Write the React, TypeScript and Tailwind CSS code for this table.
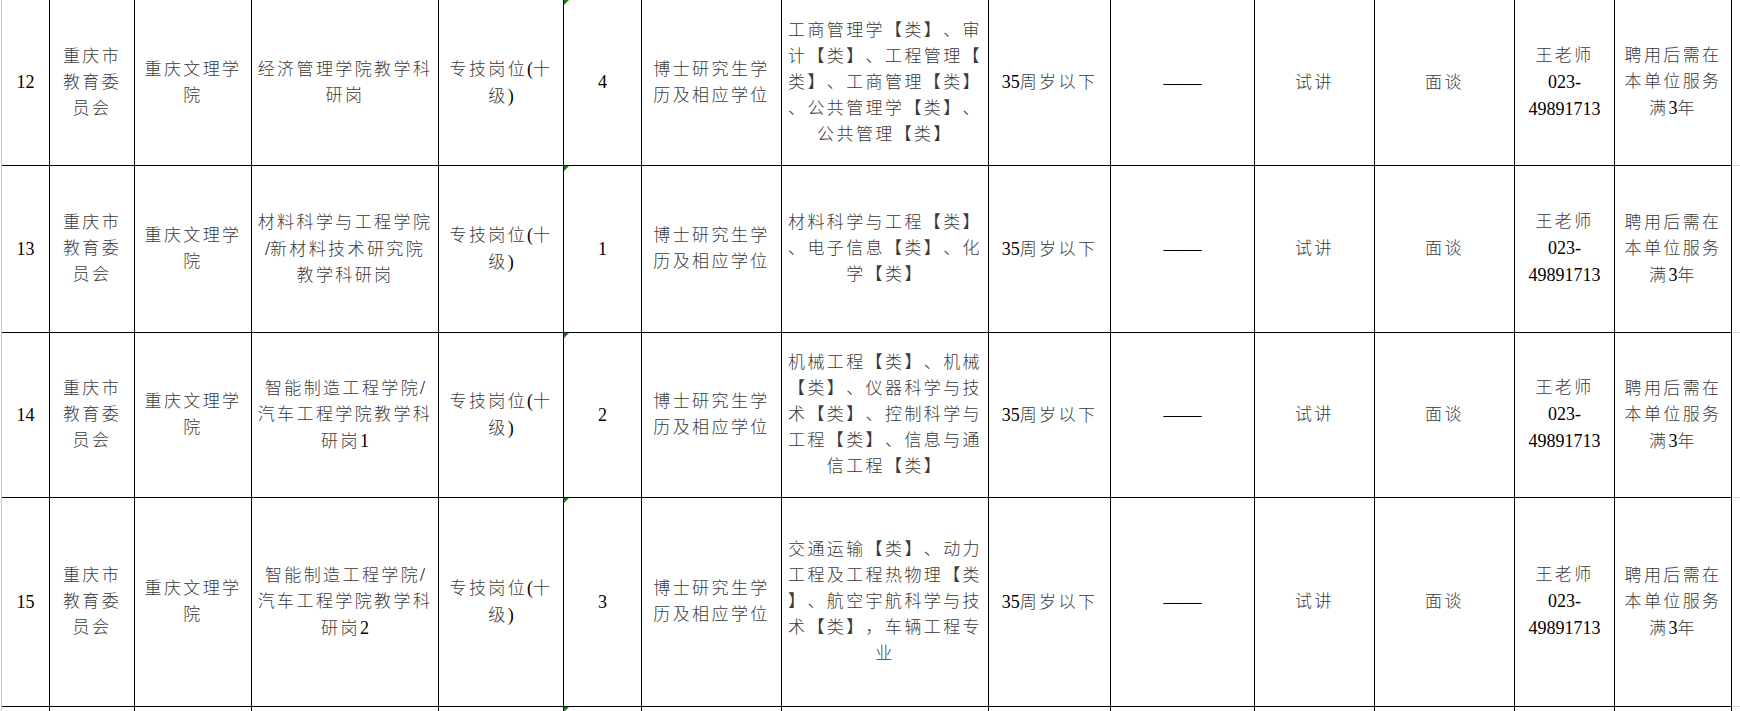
import React from 'react';

// column widths incl. right border, measured from the sheet gridlines
const COLS = [
  'w-[48px]',
  'w-[85px]',
  'w-[117px]',
  'w-[187px]',
  'w-[125px]',
  'w-[78px]',
  'w-[140px]',
  'w-[207px]',
  'w-[122px]',
  'w-[144px]',
  'w-[120px]',
  'w-[140px]',
  'w-[100px]',
  'w-[117px]',
];

type Row = {
  h: string;
  no: string;
  post: string[];
  count: string;
  majors: string[];
};

const rows: Row[] = [
  {
    h: 'h-[166px]',
    no: '12',
    post: ['经济管理学院教学科', '研岗'],
    count: '4',
    majors: ['工商管理学【类】、审', '计【类】、工程管理【', '类】、工商管理【类】', '、公共管理学【类】、', '公共管理【类】'],
  },
  {
    h: 'h-[167px]',
    no: '13',
    post: ['材料科学与工程学院', '/新材料技术研究院', '教学科研岗'],
    count: '1',
    majors: ['材料科学与工程【类】', '、电子信息【类】、化', '学【类】'],
  },
  {
    h: 'h-[165px]',
    no: '14',
    post: ['智能制造工程学院/', '汽车工程学院教学科', '研岗1'],
    count: '2',
    majors: ['机械工程【类】、机械', '【类】、仪器科学与技', '术【类】、控制科学与', '工程【类】、信息与通', '信工程【类】'],
  },
  {
    h: 'h-[209px]',
    no: '15',
    post: ['智能制造工程学院/', '汽车工程学院教学科', '研岗2'],
    count: '3',
    majors: ['交通运输【类】、动力', '工程及工程热物理【类', '】、航空宇航科学与技', '术【类】，车辆工程专', '业'],
  },
];

const CJK = /([\u3000-\u303f\u4e00-\u9fff\uff00-\uffef]+)/;

// Chinese runs get the wide SimSun-like spacing, latin stays tight
function Line({ text }: { text: string }) {
  const parts = text.split(CJK).filter(Boolean);
  return (
    <div className="whitespace-nowrap leading-[26px] [text-spacing-trim:space-all]">
      {parts.map((p, i) =>
        CJK.test(p) ? (
          <span key={i} className="text-[17px] tracking-[2.4px] font-light text-[#3a3a3a]">
            {p}
          </span>
        ) : (
          <span key={i} className="text-[18px] text-black">
            {p}
          </span>
        )
      )}
    </div>
  );
}

function Cell({ col, lines, flag }: { col: number; lines: string[]; flag?: boolean }) {
  return (
    <div className={`${COLS[col]} shrink-0 h-full border-r border-b border-black flex flex-col items-center justify-center relative`}>
      {flag && (
        <div className="absolute left-0 top-0 w-0 h-0 border-t-[5px] border-t-[#1f7a1f] border-r-[5px] border-r-transparent" />
      )}
      {lines.map((l, i) => (
        <Line key={i} text={l} />
      ))}
    </div>
  );
}

export default function App() {
  return (
    <div className="w-[1740px] h-[711px] overflow-hidden bg-white flex font-['Liberation_Serif','Noto_Sans_CJK_SC',serif]">
      <div className="w-px shrink-0" />
      <div className="w-px shrink-0 bg-[#b7c8e3]" />
      <div className="flex-1 flex flex-col">
        {rows.map((r) => (
          <div key={r.no} className={`${r.h} flex shrink-0`}>
            <Cell col={0} lines={[r.no]} />
            <Cell col={1} lines={['重庆市', '教育委', '员会']} />
            <Cell col={2} lines={['重庆文理学', '院']} />
            <Cell col={3} lines={r.post} />
            <Cell col={4} lines={['专技岗位(十', '级)']} />
            <Cell col={5} lines={[r.count]} flag />
            <Cell col={6} lines={['博士研究生学', '历及相应学位']} />
            <Cell col={7} lines={r.majors} />
            <Cell col={8} lines={['35周岁以下']} />
            <div className={`${COLS[9]} shrink-0 h-full border-r border-b border-black flex items-center justify-center`}>
              <span className="text-[19px] leading-[26px] text-black">——</span>
            </div>
            <Cell col={10} lines={['试讲']} />
            <Cell col={11} lines={['面谈']} />
            <Cell col={12} lines={['王老师', '023-', '49891713']} />
            <Cell col={13} lines={['聘用后需在', '本单位服务', '满3年']} />
            <div className="flex-1 h-full border-b border-[#d9d9d9]" />
          </div>
        ))}
        {/* next row, cut off by the window */}
        <div className="h-[20px] flex shrink-0">
          {COLS.map((c, i) => (
            <div key={i} className={`${c} shrink-0 h-full border-r border-black relative`}>
              {i === 5 && (
                <div className="absolute left-0 top-0 w-0 h-0 border-t-[5px] border-t-[#1f7a1f] border-r-[5px] border-r-transparent" />
              )}
            </div>
          ))}
          <div className="flex-1" />
        </div>
      </div>
    </div>
  );
}
